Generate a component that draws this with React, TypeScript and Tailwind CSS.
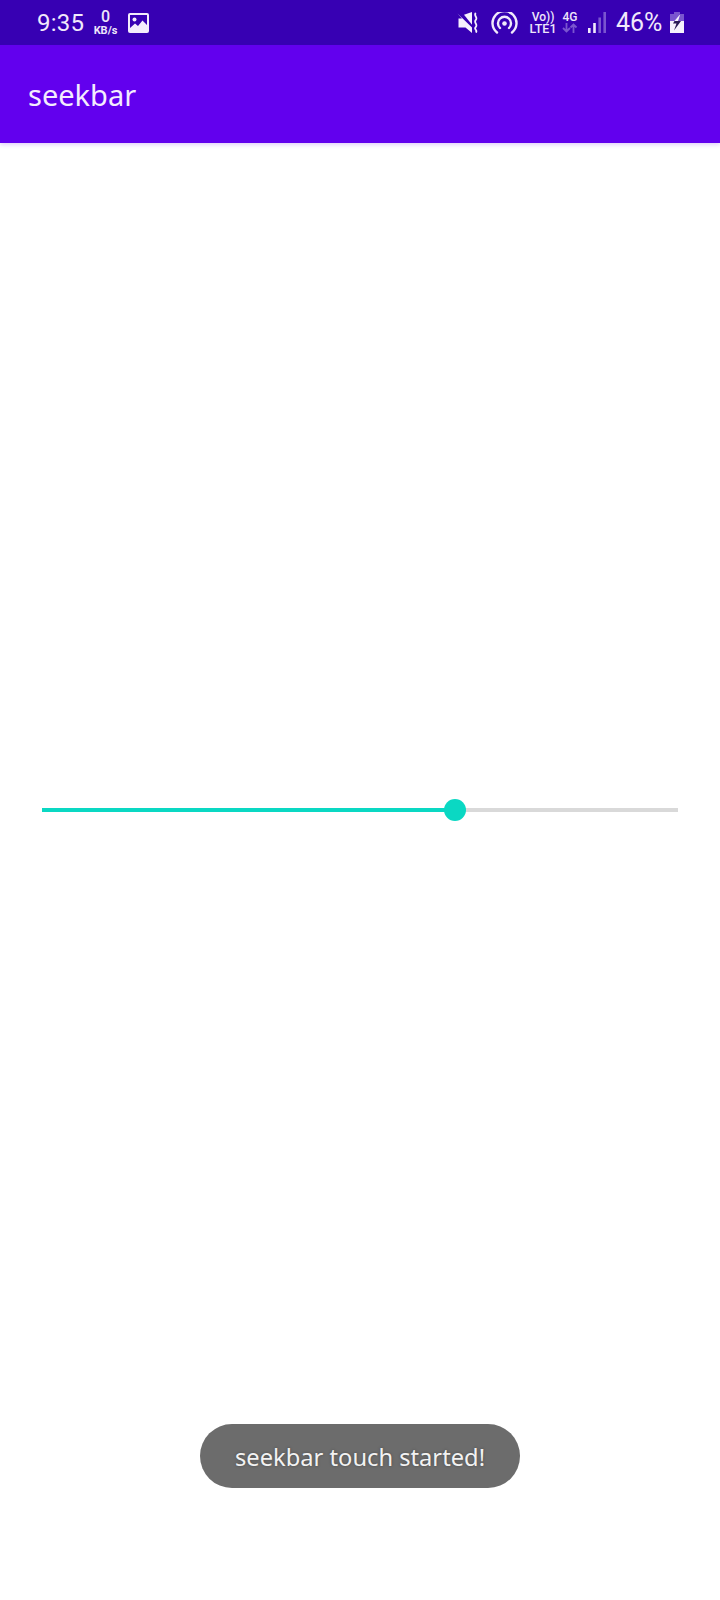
export default function App() {
  const font = { fontFamily: '"Noto Sans", sans-serif' };
  return (
    <div className="relative flex h-[1600px] w-[720px] flex-col overflow-hidden bg-white" style={font}>
      <div className="flex h-[45px] items-center bg-[#3700B3] pl-[37px] pr-[36px] text-white">
        <span className="w-[52px] text-[24px] leading-none tracking-[0.2px] text-[#f1e9fb] font-['Roboto',sans-serif]">9:35</span>
        <div className="ml-[4px] flex w-[25px] flex-col items-center gap-[2px] font-['Roboto',sans-serif] text-[#eee6fa]">
          <span className="text-[16px] font-medium leading-[15px]">0</span>
          <span className="text-[11px] font-bold leading-[10px]">KB/s</span>
        </div>
        <svg className="ml-[10px]" width="21" height="20" viewBox="0 0 21 20">
          <rect width="21" height="20" rx="2" fill="#f3ecfc" />
          <rect x="2" y="2" width="17" height="16" fill="#3700B3" />
          <circle cx="6.5" cy="6.5" r="2" fill="#f3ecfc" />
          <path d="M2 15 L7 10.5 L10 13 L14.5 7.5 L19 12 L19 18 L2 18Z" fill="#f3ecfc" />
        </svg>
        <div className="flex-1" />
        <svg width="21" height="21" viewBox="0 0 21 21" fill="none">
          <path d="M0.5 1.5 L15 15.5 V21 L8.5 15.5 H1.5 V6.5 H5 Z" fill="#f6f1fd" />
          <path d="M7 2.7 L15 0 V12.7 Z" fill="#f6f1fd" />
          <path d="M18.8 1 C16.2 3.5 21.2 5.5 18.8 8 C16.2 10.5 21.2 12.5 18.8 15 C16.2 17.5 21.2 18 18.8 20.5" stroke="#f6f1fd" strokeWidth="1.8" />
        </svg>
        <svg className="ml-[13px]" width="27" height="22" viewBox="0 0 27 22" fill="none" stroke="#f1e9fb" strokeWidth="2.4" strokeLinecap="round">
          <path d="M6 20.5 A12 12 0 1 1 21 20.5" />
          <path d="M9 16 A6.5 6.5 0 1 1 18 16" />
          <circle cx="13.5" cy="11.5" r="2.3" fill="#f1e9fb" stroke="none" />
        </svg>
        <div className="ml-[12px] flex w-[26px] flex-col items-center font-['Roboto',sans-serif] text-[#eee6fa]">
          <span className="whitespace-nowrap text-[12px] font-medium leading-[11px]">Vo))</span>
          <span className="text-[12.5px] font-medium leading-[11px]">LTE1</span>
        </div>
        <div className="ml-[6px] flex w-[16px] flex-col items-center font-['Roboto',sans-serif]">
          <span className="text-[12px] font-medium leading-[11px] text-[#eee6fa]">4G</span>
          <svg width="16" height="10" viewBox="0 0 16 10" fill="none" stroke="#7a55cf" strokeWidth="1.8">
            <path d="M4.5 0 V8 M1 5 L4.5 8.5 L8 5" />
            <path d="M11.5 10 V1.5 M8.5 4.5 L11.5 1.5 L14.5 4.5" />
          </svg>
        </div>
        <svg className="ml-[10px]" width="18" height="21" viewBox="0 0 18 21">
          <rect x="0" y="16" width="2.6" height="5" fill="#f1e9fb" />
          <rect x="5.2" y="11" width="2.6" height="10" fill="#f1e9fb" />
          <rect x="10.4" y="5.5" width="2.6" height="15.5" fill="#7a55cf" />
          <rect x="15.4" y="0" width="2.6" height="21" fill="#7a55cf" />
        </svg>
        <span className="ml-[10px] w-[49px] whitespace-nowrap text-[25px] leading-none text-[#f1e9fb] font-['Roboto',sans-serif]">46%</span>
        <svg className="ml-[5px]" width="14" height="21" viewBox="0 0 14 21">
          <path d="M4 0 H10 V2 H14 V9 H0 V2 H4 Z" fill="#7a55cf" />
          <rect x="0" y="9" width="14" height="12" fill="#f6f1fd" />
          <path d="M9.5 3 L4.5 9 H8 L10 3 Z" fill="#f6f1fd" />
          <path d="M4.5 9 L3 11.5 H6.5 L4 18.5 L11 9 Z" fill="#2a1a55" />
        </svg>
      </div>
      <div className="z-10 flex h-[98px] items-center bg-[#6200EE] pl-[28px] shadow-[0_2px_4px_rgba(98,0,238,0.18)]">
        <span className="text-[29px] leading-none text-[#f4ecfe]">seekbar</span>
      </div>
      <div className="flex flex-1 flex-col items-stretch px-[42px] pt-[665px]">
        <div className="flex h-[4px] items-center">
          <div className="h-[4px] w-[413px] bg-[#0AD8C3]" />
          <div className="relative h-[22px] w-[22px] shrink-0 -ml-[11px] -mr-[11px] rounded-full bg-[#0AD8C3]" />
          <div className="h-[4px] flex-1 bg-[#D9D9D9]" />
        </div>
      </div>
      <div className="absolute left-[200px] top-[1424px] flex h-[64px] w-[320px] items-center justify-center rounded-[32px] bg-[#6C6C6C] pt-[3px]">
        <span className="text-[23.7px] leading-none text-[#f2f2f2] [text-shadow:0_0_3px_rgba(0,0,0,0.35)]">seekbar touch started!</span>
      </div>
    </div>
  );
}
